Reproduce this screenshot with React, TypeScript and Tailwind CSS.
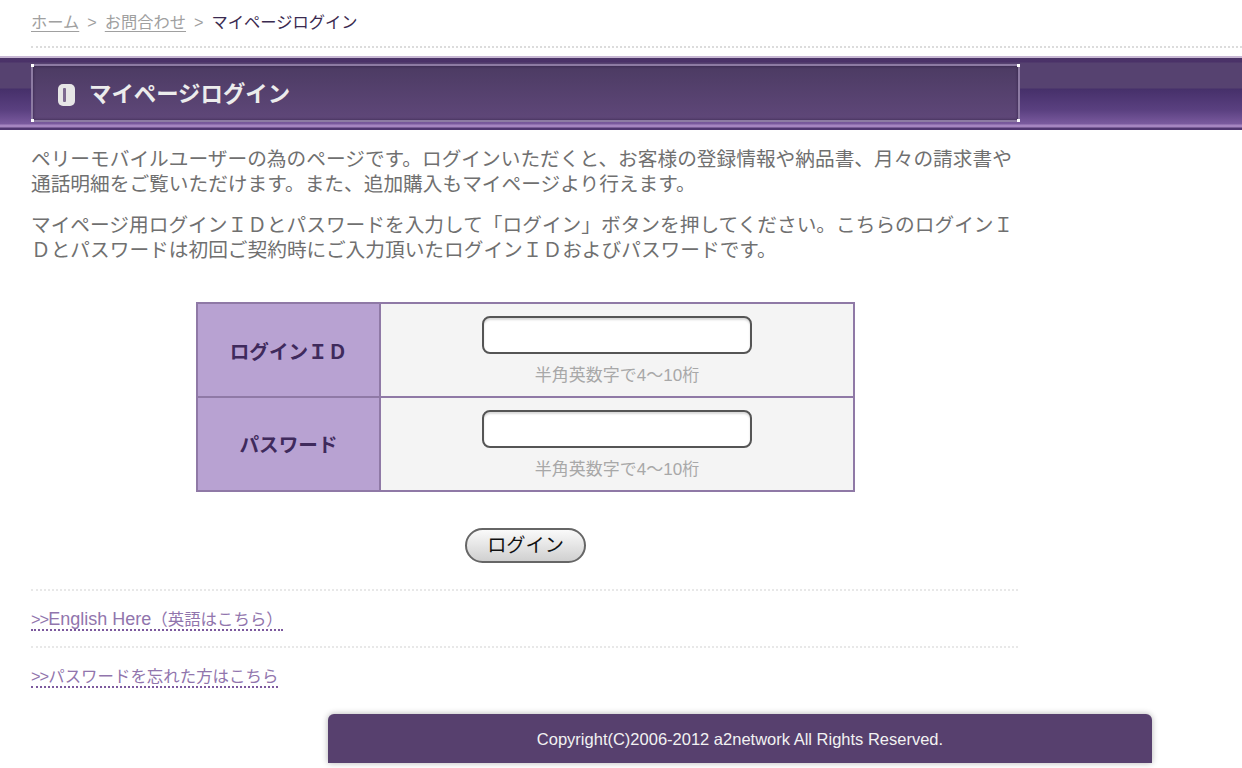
import React from 'react';

const FONT = "font-['Liberation_Sans','Noto_Sans_CJK_JP',sans-serif]";

const Field = () => (
  <td className="h-[94px] bg-[#f4f4f4] align-top pt-[12px] text-center">
    <input
      type="text"
      className="block mx-auto w-[270px] h-[38px] bg-white border-2 border-[#555] rounded-[8px] shadow-[inset_0_2px_2px_rgba(0,0,0,0.15)]"
    />
    <p className="text-[17px] leading-[20px] mt-[12px] text-[#a8a8a8]">半角英数字で4〜10桁</p>
  </td>
);

const App: React.FC = () => {
  return (
    <div className={`${FONT} w-[1242px] bg-white text-[#707070]`}>
      {/* Breadcrumb */}
      <div className="ml-[31px] h-[48px] pt-[10px] border-b-2 border-dotted border-[#dcdcdc] flex items-start text-[16.25px] leading-[24px] text-[#a0a0a0]">
        <a className="underline underline-offset-[3px]">ホーム</a>
        <span className="mx-[8px]">&gt;</span>
        <a className="underline underline-offset-[3px]">お問合わせ</a>
        <span className="mx-[8px]">&gt;</span>
        <span className="text-[#3a2a50]">マイページログイン</span>
      </div>

      {/* Title band */}
      <div className="mt-[8px] h-[74px] pt-[6px] pl-[31px] border-t-2 border-[#c8b8d4] bg-[linear-gradient(#4b3468_0px,#4a3168_4px,#564270_5px,#564270_30px,#46306a_31px,#5a4080_52px,#7a5a9e_66px,#a585c0_67px,#a585c0_69px,#4f3570_70px)]">
        <div className="relative w-[989px] h-[58px] flex items-center pl-[25px] pt-[3px] border-2 border-[#8d7ba3] rounded-[2px] bg-[linear-gradient(#4c3b63,#5f4779)] shadow-[inset_0_0_3px_rgba(40,25,60,0.8)]">
          <span className="absolute -left-[2px] -top-[2px] w-[3px] h-[3px] bg-white" />
          <span className="absolute -right-[2px] -top-[2px] w-[3px] h-[3px] bg-white" />
          <span className="absolute -left-[2px] -bottom-[2px] w-[3px] h-[3px] bg-white" />
          <span className="absolute -right-[2px] -bottom-[2px] w-[3px] h-[3px] bg-white" />
          <span className="w-[17px] h-[22px] mr-[14px] rounded-[5px] bg-[#e6e6e6] flex items-stretch pl-[5px] py-[4px]">
            <span className="w-[3px] bg-[#7d6a90] rounded-[1px]" />
          </span>
          <h1 className="text-[22.4px] font-bold text-[#ececec]">マイページログイン</h1>
        </div>
      </div>

      {/* Intro */}
      <div className="w-[990px] ml-[31px] mt-[17px] text-[19.7px] leading-[25px]">
        <p>ペリーモバイルユーザーの為のページです。ログインいただくと、お客様の登録情報や納品書、月々の請求書や通話明細をご覧いただけます。また、追加購入もマイページより行えます。</p>
        <p className="mt-[16px]">マイページ用ログインＩＤとパスワードを入力して「ログイン」ボタンを押してください。こちらのログインＩＤとパスワードは初回ご契約時にご入力頂いたログインＩＤおよびパスワードです。</p>
      </div>

      {/* Login form */}
      <table className="ml-[196px] mt-[39px] w-[659px] border-collapse border-2 border-[#8f79a6]">
        <tbody>
          <tr className="border-b-2 border-[#8f79a6]">
            <th className="w-[183px] pt-[5px] bg-[#b8a2d2] border-r-2 border-[#8f79a6] text-[19.6px] font-bold text-[#3f2a5c]">ログインＩＤ</th>
            <Field />
          </tr>
          <tr>
            <th className="w-[183px] pt-[3px] bg-[#b8a2d2] border-r-2 border-[#8f79a6] text-[19.6px] font-bold text-[#3f2a5c]">パスワード</th>
            <Field />
          </tr>
        </tbody>
      </table>

      <div className="ml-[465px] mt-[36px]">
        <button className="block w-[121px] h-[35px] rounded-full border-2 border-[#666] bg-[linear-gradient(#fafafa,#d0d0d0)] text-[19.2px] leading-[30px] text-[#111]">ログイン</button>
      </div>

      {/* Links */}
      <div className="w-[987px] ml-[31px] mt-[26px]">
        <div className="h-[57px] pt-[16px] border-t-2 border-dotted border-[#e8e8e8]">
          <a className="inline-block h-[24px] text-[16.45px] leading-[24px] text-[#9175ad] border-b-2 border-dotted border-[#7d5a9e]">
            <span className="tracking-[-1px]">&gt;&gt;</span>
            <span className="text-[18px]">English Here</span>（英語はこちら）
          </a>
        </div>
        <div className="h-[57px] pt-[16px] border-t-2 border-dotted border-[#e8e8e8]">
          <a className="inline-block h-[24px] text-[16.45px] leading-[24px] text-[#9175ad] border-b-2 border-dotted border-[#7d5a9e]">
            <span className="tracking-[-1px]">&gt;&gt;</span>パスワードを忘れた方はこちら
          </a>
        </div>
      </div>

      {/* Footer */}
      <div className="ml-[328px] mt-[11px] w-[824px] h-[49px] mb-[5px] pt-[2px] rounded-t-[6px] bg-[#57406e] shadow-[0_0_6px_rgba(0,0,0,0.3)] flex items-center justify-center text-[16.5px] text-[#f2f2f2]">
        Copyright(C)2006-2012 a2network All Rights Reserved.
      </div>
    </div>
  );
};

export default App;
